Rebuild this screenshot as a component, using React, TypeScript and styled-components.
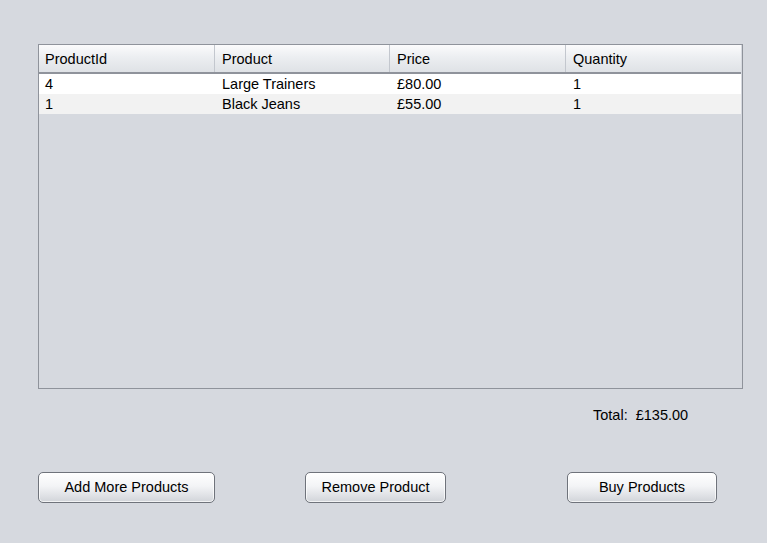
import React from "react";
import styled, { createGlobalStyle } from "styled-components";

const Global = createGlobalStyle`
  html, body { margin: 0; padding: 0; background: #d6d9df; }
  body { font-family: "Liberation Sans", Arial, sans-serif; font-size: 14.5px; color: #000; }
`;

const Page = styled.div`
  width: 767px;
  height: 543px;
  box-sizing: border-box;
  padding: 44px 0 0 38px;
  display: flex;
  flex-direction: column;
`;

const TableBox = styled.div`
  width: 705px;
  height: 345px;
  box-sizing: border-box;
  border: 1px solid #8f939b;
  background: #d6d9df;
  display: flex;
  flex-direction: column;
`;

const cols = "175px 175px 176px 1fr";

const HeaderRow = styled.div`
  display: grid;
  grid-template-columns: ${cols};
  height: 27px;
  border-bottom: 2px solid #8f939b;
  background: linear-gradient(#fbfbfc 0%, #eceef1 45%, #dfe2e6 100%);
  margin-right: 1px;
`;

const HeaderCell = styled.div<{ $first?: boolean }>`
  display: flex;
  align-items: center;
  padding-top: 2px;
  padding-left: ${(p) => (p.$first ? "6px" : "7px")};
  border-left: ${(p) => (p.$first ? "none" : "1px solid #c3c7ce")};
  line-height: 1;
`;

const Row = styled.div<{ $alt?: boolean }>`
  display: grid;
  grid-template-columns: ${cols};
  height: 20px;
  background: ${(p) => (p.$alt ? "#f2f2f2" : "#ffffff")};
  margin-right: 1px;
`;

const Cell = styled.div<{ $first?: boolean }>`
  display: flex;
  align-items: center;
  padding-left: ${(p) => (p.$first ? "6px" : "8px")};
`;

const TotalRow = styled.div`
  display: flex;
  height: 50px;
  box-sizing: border-box;
  padding-top: 2px;
  align-items: center;
  padding-left: 555px;
  white-space: pre;
`;

const ButtonRow = styled.div`
  display: flex;
  margin-top: 33px;
`;

const Button = styled.button<{ $w: number; $offset: number }>`
  width: ${(p) => p.$w}px;
  height: 31px;
  margin-left: ${(p) => p.$offset}px;
  box-sizing: border-box;
  border: 1px solid #6f737b;
  border-radius: 5px;
  background: linear-gradient(#ffffff 0%, #f3f4f6 45%, #e1e3e7 75%, #d1d4d9 100%);
  box-shadow: inset 0 0 0 1px rgba(255,255,255,0.7);
  font-family: "Liberation Sans", Arial, sans-serif;
  font-size: 14.5px;
  color: #000;
  padding: 0 0 1px;
`;

const rows = [
  ["4", "Large Trainers", "£80.00", "1"],
  ["1", "Black Jeans", "£55.00", "1"],
];

export default function App() {
  return (
    <>
      <Global />
      <Page>
        <TableBox>
          <HeaderRow>
            {["ProductId", "Product", "Price", "Quantity"].map((h, i) => (
              <HeaderCell key={h} $first={i === 0}>{h}</HeaderCell>
            ))}
          </HeaderRow>
          {rows.map((r, ri) => (
            <Row key={ri} $alt={ri % 2 === 1}>
              {r.map((c, ci) => (
                <Cell key={ci} $first={ci === 0}>{c}</Cell>
              ))}
            </Row>
          ))}
        </TableBox>
        <TotalRow>{"Total:  £135.00"}</TotalRow>
        <ButtonRow>
          <Button $w={177} $offset={0}>Add More Products</Button>
          <Button $w={141} $offset={90}>Remove Product</Button>
          <Button $w={150} $offset={121}>Buy Products</Button>
        </ButtonRow>
      </Page>
    </>
  );
}
